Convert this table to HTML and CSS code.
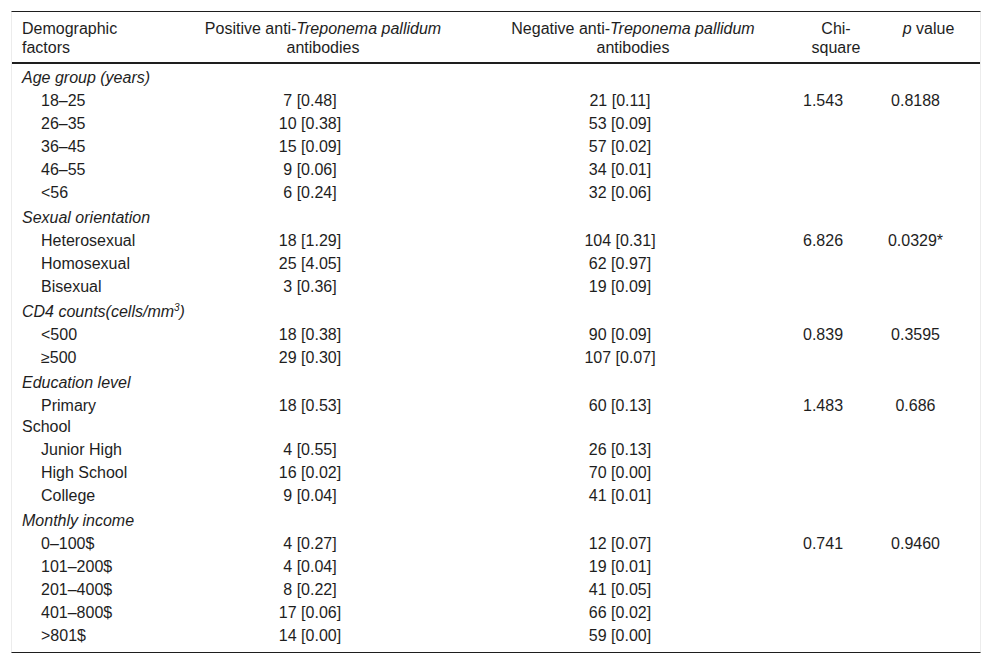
FILE: index.html
```html
<!DOCTYPE html>
<html>
<head>
<meta charset="utf-8">
<link rel="stylesheet" href="styles.css">
</head>
<body>
<div class="wrap">
<table class="tbl">
<colgroup>
<col class="c1"><col class="c2"><col class="c3"><col class="c4"><col class="c5">
</colgroup>
<thead>
<tr>
<th class="left">Demographic factors</th>
<th>Positive anti-<i>Treponema pallidum</i> antibodies</th>
<th>Negative anti-<i>Treponema pallidum</i> antibodies</th>
<th>Chi-square</th>
<th><i>p</i> value</th>
</tr>
</thead>
<tbody>
<tr class="cat"><td colspan="5">Age group (years)</td></tr>
<tr><td class="sub">18–25</td><td class="num">7 [0.48]</td><td class="num">21 [0.11]</td><td class="num">1.543</td><td class="num">0.8188</td></tr>
<tr><td class="sub">26–35</td><td class="num">10 [0.38]</td><td class="num">53 [0.09]</td><td class="num"></td><td class="num"></td></tr>
<tr><td class="sub">36–45</td><td class="num">15 [0.09]</td><td class="num">57 [0.02]</td><td class="num"></td><td class="num"></td></tr>
<tr><td class="sub">46–55</td><td class="num">9 [0.06]</td><td class="num">34 [0.01]</td><td class="num"></td><td class="num"></td></tr>
<tr><td class="sub">&lt;56</td><td class="num">6 [0.24]</td><td class="num">32 [0.06]</td><td class="num"></td><td class="num"></td></tr>
<tr class="cat"><td colspan="5">Sexual orientation</td></tr>
<tr><td class="sub">Heterosexual</td><td class="num">18 [1.29]</td><td class="num">104 [0.31]</td><td class="num">6.826</td><td class="num">0.0329*</td></tr>
<tr><td class="sub">Homosexual</td><td class="num">25 [4.05]</td><td class="num">62 [0.97]</td><td class="num"></td><td class="num"></td></tr>
<tr><td class="sub">Bisexual</td><td class="num">3 [0.36]</td><td class="num">19 [0.09]</td><td class="num"></td><td class="num"></td></tr>
<tr class="cat"><td colspan="5">CD4 counts(cells/mm<sup>3</sup>)</td></tr>
<tr><td class="sub">&lt;500</td><td class="num">18 [0.38]</td><td class="num">90 [0.09]</td><td class="num">0.839</td><td class="num">0.3595</td></tr>
<tr><td class="sub">≥500</td><td class="num">29 [0.30]</td><td class="num">107 [0.07]</td><td class="num"></td><td class="num"></td></tr>
<tr class="cat"><td colspan="5">Education level</td></tr>
<tr><td class="sub">Primary<br>School</td><td class="num">18 [0.53]</td><td class="num">60 [0.13]</td><td class="num">1.483</td><td class="num">0.686</td></tr>
<tr><td class="sub">Junior High</td><td class="num">4 [0.55]</td><td class="num">26 [0.13]</td><td class="num"></td><td class="num"></td></tr>
<tr><td class="sub">High School</td><td class="num">16 [0.02]</td><td class="num">70 [0.00]</td><td class="num"></td><td class="num"></td></tr>
<tr><td class="sub">College</td><td class="num">9 [0.04]</td><td class="num">41 [0.01]</td><td class="num"></td><td class="num"></td></tr>
<tr class="cat"><td colspan="5">Monthly income</td></tr>
<tr><td class="sub">0–100$</td><td class="num">4 [0.27]</td><td class="num">12 [0.07]</td><td class="num">0.741</td><td class="num">0.9460</td></tr>
<tr><td class="sub">101–200$</td><td class="num">4 [0.04]</td><td class="num">19 [0.01]</td><td class="num"></td><td class="num"></td></tr>
<tr><td class="sub">201–400$</td><td class="num">8 [0.22]</td><td class="num">41 [0.05]</td><td class="num"></td><td class="num"></td></tr>
<tr><td class="sub">401–800$</td><td class="num">17 [0.06]</td><td class="num">66 [0.02]</td><td class="num"></td><td class="num"></td></tr>
<tr><td class="sub">&gt;801$</td><td class="num">14 [0.00]</td><td class="num">59 [0.00]</td><td class="num"></td><td class="num"></td></tr>
</tbody>
</table>
</div>
</body>
</html>
```

FILE: styles.css
```css
html, body {
  margin: 0;
  padding: 0;
  background: #fff;
}
body {
  padding: 11px 11px 0 11px;
  font-family: "Liberation Sans", Arial, sans-serif;
  font-size: 16px;
  color: #1e1e1e;
}
.wrap {
  width: 968px;
  border-left: 1px solid #ececec;
  border-right: 1px solid #ececec;
  border-top: 1px solid #1e1e1e;
  border-bottom: 1px solid #1e1e1e;
  padding-bottom: 5px;
}
.tbl {
  width: 968px;
  table-layout: fixed;
  border-collapse: collapse;
  border-spacing: 0;
}
.c1 { width: 163px; }
.c2 { width: 296px; }
.c3 { width: 324px; }
.c4 { width: 82px; }
.c5 { width: 103px; }
th {
  font-weight: normal;
  text-align: center;
  line-height: 19px;
  padding: 7px 8px 5px 8px;
  vertical-align: top;
  border-bottom: 2px solid #1e1e1e;
}
th.left {
  text-align: left;
  padding-left: 10px;
  padding-right: 12px;
}
td {
  line-height: 21px;
  padding: 1px 8px;
  vertical-align: top;
  white-space: nowrap;
}
.cat td {
  font-style: italic;
  padding: 3px 10px 1px 10px;
}
.cat sup {
  font-size: 10px;
  line-height: 0;
}
td.sub {
  padding-left: 10px;
  text-indent: 19px;
}
td.num {
  text-align: center;
  padding: 1px 34px 1px 8px;
}
```
